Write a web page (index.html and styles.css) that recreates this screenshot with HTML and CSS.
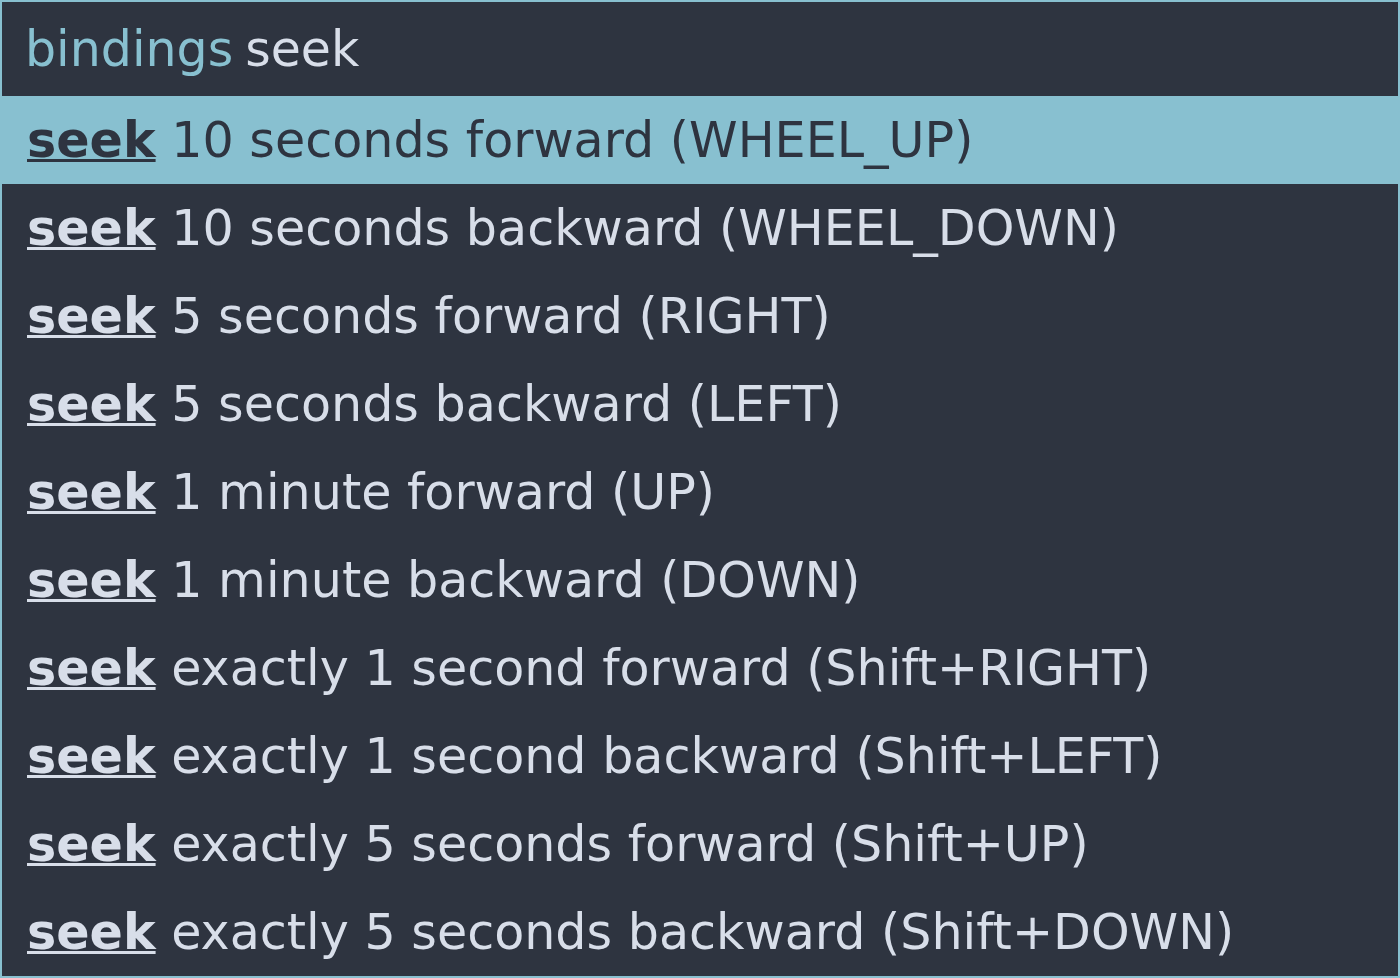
FILE: index.html
```html
<!DOCTYPE html>
<html>
<head>
<meta charset="utf-8">
<link rel="stylesheet" href="styles.css">
</head>
<body>
<div class="menu">
  <div class="prompt"><span class="label">bindings</span><span class="query">seek</span></div>
  <ul class="list">
    <li class="item selected"><b>seek</b> 10 seconds forward (WHEEL_UP)</li>
    <li class="item"><b>seek</b> 10 seconds backward (WHEEL_DOWN)</li>
    <li class="item"><b>seek</b> 5 seconds forward (RIGHT)</li>
    <li class="item"><b>seek</b> 5 seconds backward (LEFT)</li>
    <li class="item"><b>seek</b> 1 minute forward (UP)</li>
    <li class="item"><b>seek</b> 1 minute backward (DOWN)</li>
    <li class="item"><b>seek</b> exactly 1 second forward (Shift+RIGHT)</li>
    <li class="item"><b>seek</b> exactly 1 second backward (Shift+LEFT)</li>
    <li class="item"><b>seek</b> exactly 5 seconds forward (Shift+UP)</li>
    <li class="item"><b>seek</b> exactly 5 seconds backward (Shift+DOWN)</li>
  </ul>
</div>
</body>
</html>
```
FILE: styles.css
```css
html, body {
  margin: 0;
  padding: 0;
  background: #2e3440;
}
body {
  font-family: "DejaVu Sans", sans-serif;
  color: #d8dee9;
}
.menu {
  box-sizing: border-box;
  width: 1400px;
  height: 978px;
  border: 2px solid #88c0d0;
  background: #2e3440;
  display: flex;
  flex-direction: column;
}
.prompt {
  height: 94px;
  display: flex;
  align-items: center;
  padding-left: 23px;
  font-size: 49px;
  white-space: pre;
}
.label {
  color: #88c0d0;
  margin-right: 12px;
}
.query {
  color: #d8dee9;
}
.list {
  list-style: none;
  margin: 0;
  padding: 0;
}
.item {
  height: 88px;
  display: flex;
  align-items: center;
  padding-left: 25px;
  font-size: 49.15px;
  white-space: pre;
}
.item b {
  font-weight: bold;
  text-decoration: underline;
  text-decoration-thickness: 3px;
  text-underline-offset: 2px;
}
.selected {
  background: #88c0d0;
  color: #2e3440;
}
```
